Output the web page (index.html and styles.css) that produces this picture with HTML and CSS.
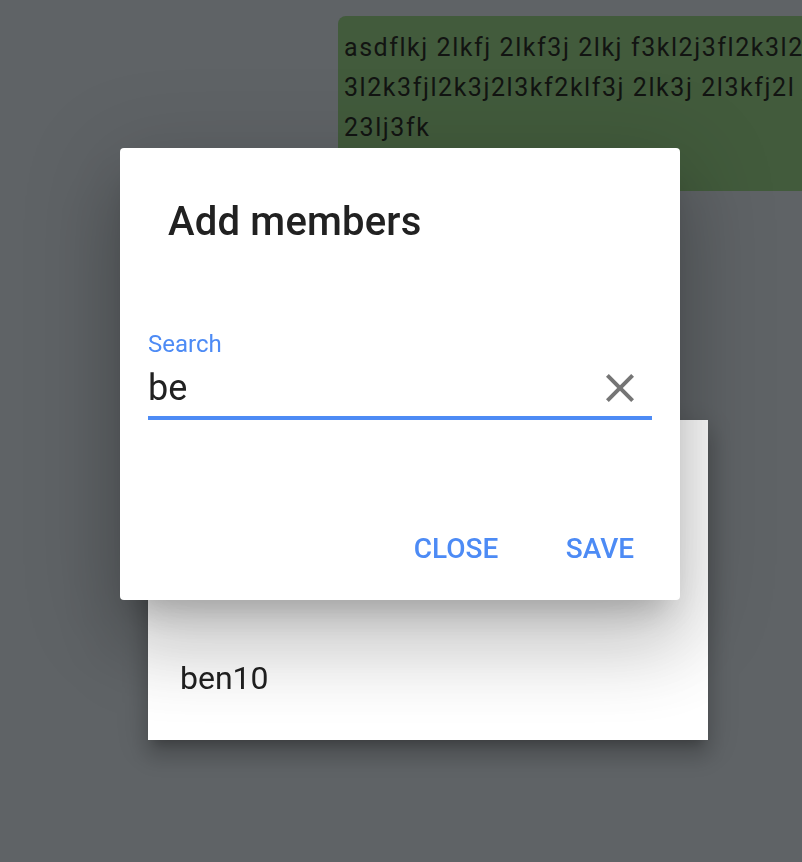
FILE: index.html
```html
<!DOCTYPE html>
<html lang="en">
<head>
<meta charset="utf-8">
<title>Add members</title>
<link rel="stylesheet" href="styles.css">
</head>
<body>
  <main class="chat">
    <div class="bubble">
      <p class="bubble-text">asdflkj 2lkfj 2lkf3j 2lkj f3kl2j3fl2k3l2j3<br>3l2k3fjl2k3j2l3kf2klf3j 2lk3j 2l3kfj2l j3kl<br>23lj3fk</p>
    </div>
  </main>

  <div class="suggestions">
    <ul class="suggestion-list">
      <li class="suggestion">ben10</li>
    </ul>
  </div>

  <section class="dialog" role="dialog" aria-labelledby="dialog-title">
    <h2 class="dialog-title" id="dialog-title">Add members</h2>
    <div class="field">
      <label class="field-label" for="member-search">Search</label>
      <div class="field-row">
        <input class="field-input" id="member-search" type="text" value="be">
        <button class="clear-btn" type="button" aria-label="Clear">
          <svg viewBox="0 0 24 24" width="48" height="48" aria-hidden="true">
            <path fill="currentColor" d="M19 6.41L17.590 5 12 10.59 6.41 5 5 6.41 10.59 12 5 17.59 6.41 19 12 13.41 17.59 19 19 17.59 13.41 12z"/>
          </svg>
        </button>
      </div>
    </div>
    <div class="dialog-actions">
      <button class="text-btn" type="button">Close</button>
      <button class="text-btn" type="button">Save</button>
    </div>
  </section>
</body>
</html>
```

FILE: styles.css
```css
html, body {
  margin: 0;
  height: 100%;
}

body {
  background: #5f6366;
  font-family: Roboto, "Noto Sans", sans-serif;
  overflow: hidden;
}

/* chat behind the dialog */
.chat {
  padding: 16px 0 0 338px;
}

.bubble {
  width: 520px;
  height: 175px;
  box-sizing: border-box;
  padding: 12px 6px;
  background: #425b3c;
  border-radius: 8px;
}

.bubble-text {
  margin: 0;
  font-size: 25px;
  line-height: 40px;
  letter-spacing: 1.55px;
  color: #121412;
  white-space: nowrap;
}

/* autocomplete list under the search field */
.suggestions {
  position: fixed;
  left: 148px;
  top: 420px;
  width: 560px;
  height: 320px;
  box-sizing: border-box;
  padding: 18px 0 14px;
  display: flex;
  flex-direction: column;
  justify-content: flex-end;
  background: #fff;
  box-shadow: 0 10px 10px -6px rgba(0, 0, 0, .2),
              0 16px 20px 2px rgba(0, 0, 0, .14),
              0 6px 28px 4px rgba(0, 0, 0, .12);
  z-index: 1;
}

.suggestion-list {
  list-style: none;
  margin: 0;
  padding: 0;
}

.suggestion {
  height: 96px;
  line-height: 96px;
  padding: 0 32px;
  font-size: 32px;
  color: #212121;
}

/* dialog */
.dialog {
  position: fixed;
  left: 120px;
  top: 148px;
  width: 560px;
  height: 452px;
  box-sizing: border-box;
  display: flex;
  flex-direction: column;
  background: #fff;
  border-radius: 4px;
  box-shadow: 0 22px 30px -14px rgba(0, 0, 0, .2),
              0 48px 76px 6px rgba(0, 0, 0, .14),
              0 18px 92px 16px rgba(0, 0, 0, .12);
  z-index: 2;
}

.dialog-title {
  margin: 0;
  padding: 50px 48px 0;
  font-size: 40px;
  line-height: 48px;
  font-weight: 500;
  letter-spacing: .2px;
  color: #212121;
}

.field {
  margin: 84px 28px 0;
}

.field-label {
  display: block;
  font-size: 24px;
  line-height: 28px;
  color: #4d8bf5;
}

.field-row {
  display: flex;
  align-items: flex-start;
  height: 44px;
  margin-top: 5px;
  padding-bottom: 9px;
  border-bottom: 4px solid #4d8bf5;
}

.field-input {
  flex: 1;
  min-width: 0;
  height: 44px;
  margin-top: 3px;
  padding: 0;
  border: 0;
  outline: none;
  background: transparent;
  font-family: inherit;
  font-size: 36px;
  color: #212121;
}

.clear-btn {
  flex: none;
  width: 48px;
  height: 48px;
  margin: 1px 8px 0 0;
  padding: 0;
  border: 0;
  background: none;
  color: #757575;
  display: flex;
}

.dialog-actions {
  margin-top: auto;
  padding: 16px;
  display: flex;
  justify-content: flex-end;
  gap: 16px;
}

.text-btn {
  min-width: 128px;
  height: 72px;
  padding: 0 16px;
  border: 0;
  border-radius: 8px;
  background: none;
  font-family: inherit;
  font-size: 28px;
  font-weight: 500;
  text-transform: uppercase;
  color: #4d8bf5;
}
```
